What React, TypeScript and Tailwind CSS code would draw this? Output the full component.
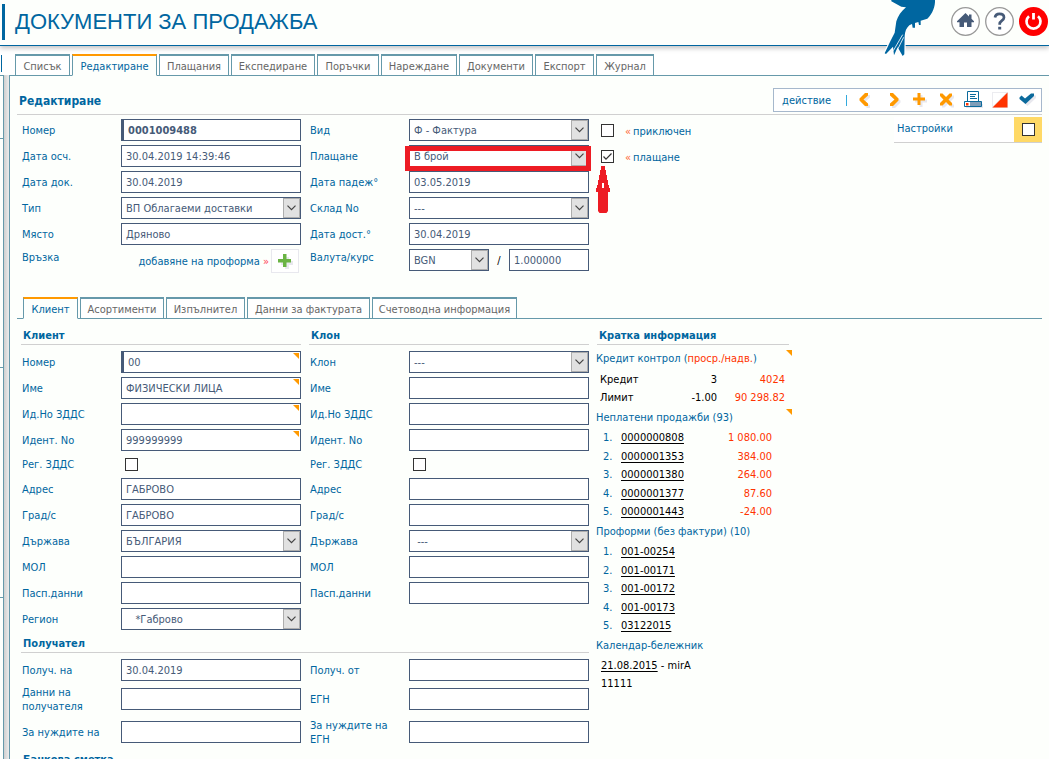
import { ReactNode, useId } from 'react';

const MAIN_TABS = [
  { label: 'Списък', width: 'w-[55px]' },
  { label: 'Редактиране', width: 'w-[85px]', active: true },
  { label: 'Плащания', width: 'w-[70px]' },
  { label: 'Експедиране', width: 'w-[84px]' },
  { label: 'Поръчки', width: 'w-[62px]' },
  { label: 'Нареждане', width: 'w-[76px]' },
  { label: 'Документи', width: 'w-[74px]' },
  { label: 'Експорт', width: 'w-[59px]' },
  { label: 'Журнал', width: 'w-[58px]' },
];

const DETAIL_TABS = [
  { label: 'Клиент', width: 'w-[55px]', active: true },
  { label: 'Асортименти', width: 'w-[84px]' },
  { label: 'Изпълнител', width: 'w-[79px]' },
  { label: 'Данни за фактурата', width: 'w-[123px]' },
  { label: 'Счетоводна информация', width: 'w-[145px]' },
];

const UNPAID = [
  ['0000000808', '1 080.00'],
  ['0000001353', '384.00'],
  ['0000001380', '264.00'],
  ['0000001377', '87.60'],
  ['0000001443', '-24.00'],
];

const PROFORMAS = ['001-00254', '001-00171', '001-00172', '001-00173', '03122015'];

export default function App() {
  return (
    <div className="h-screen overflow-hidden flex flex-col bg-[#fdfffc] text-[#0066a0] text-[11px] leading-[14px] font-['DejaVu_Sans_Condensed','DejaVu_Sans',sans-serif]">
      <Header />
      <div className="flex flex-1 min-h-0">
        <SideStrip />
        <main className="flex-1 min-w-0 flex flex-col">
          <Tabs tabs={MAIN_TABS} className="pt-2 bg-white" />
          <div className="flex-1 border-l border-[#6699aa] px-[7px]">
            <div className="flex items-end justify-between h-[39px] pb-0.5 border-b border-[#d0d0d0]">
              <h2 className="pl-0.5 pb-[3px] text-xs font-bold">Редактиране</h2>
              <Toolbar />
            </div>
            <div className="flex justify-between items-start">
              <DocumentForm />
              <Settings />
            </div>
            <Tabs tabs={DETAIL_TABS} className="mt-[22px]" />
            <div className="flex gap-2 pl-1">
              <div className="shrink-0">
                <div className="flex gap-2">
                  <ClientColumn />
                  <BranchColumn />
                </div>
                <RecipientSection />
                <SectionTitle>Банкова сметка</SectionTitle>
              </div>
              <InfoColumn />
            </div>
          </div>
        </main>
      </div>
    </div>
  );
}

function Header() {
  return (
    <header className="relative z-10 shrink-0 h-[46px] flex items-start justify-between border-b border-[#0066a0] bg-[#fdfffc] shadow-[0_2px_5px_rgba(0,0,0,0.25)]">
      <div className="mt-1 ml-0.5 h-9 border-l-3 border-[#0066a0] pl-[10px] flex items-center">
        <h1 className="text-[22px] leading-9 font-['Liberation_Sans',Arial,sans-serif]">ДОКУМЕНТИ ЗА ПРОДАЖБА</h1>
      </div>
      <div className="flex items-start">
        <Swallow />
        <div className="flex gap-[5px] pt-[7px] pr-px">
          <button aria-label="Начало" className="size-[29px]">
            <svg viewBox="0 0 29 29" className="size-full">
              <circle cx="14.5" cy="14.5" r="13.8" fill="#fff" stroke="#999" strokeWidth="1.3" />
              <path d="M14.5 6 6 14.3v1h2.500V20h4.500v-4.500h3V20h4.500v-4.700H23v-1l-2.500-2.500V7.500h-2.500v1.900z" fill="#465a78" />
            </svg>
          </button>
          <button aria-label="Помощ" className="size-[29px]">
            <svg viewBox="0 0 29 29" className="size-full">
              <circle cx="14.5" cy="14.5" r="13.8" fill="#fff" stroke="#999" strokeWidth="1.3" />
              <path d="M10 10.500C10.300 7.800 12 6.800 14.500 6.800s4.500 1.300 4.500 3.700c0 3-4.300 3.200-4.300 6.300v1" fill="none" stroke="#465a78" strokeWidth="2.700" />
              <path d="M13.200 19.800h3v2.700h-3z" fill="#465a78" />
            </svg>
          </button>
          <button aria-label="Изход" className="size-[29px]">
            <svg viewBox="0 0 29 29" className="size-full">
              <circle cx="14.5" cy="14.5" r="14.500" fill="#f00" />
              <path d="M10 9.200a7 7 0 1 0 9 0" fill="none" stroke="#fff" strokeWidth="2.700" />
              <path d="M13.100 6h2.800v6.500h-2.800z" fill="#fff" />
            </svg>
          </button>
        </div>
      </div>
    </header>
  );
}

function Swallow() {
  const body =
    'M64 0H195C196 18 188 42 172 56L152 62V75H147L145 66 135 69V83H128L126 72 118 76C109 84 105 94 104 108L103 163 98 168 83 142 72 166 69 140 48 162 44 160 61 124 74 98 79 64C84 48 93 34 108 22L94 20 64 4Z';
  return (
    <svg viewBox="42 0 156 174" className="w-[52px] h-[58px] mr-[15px]">
      <path d="M104 100 103 163 98 168 83 142 72 166 69 140 48 162 44 160 61 124 76 94Z" fill="#fff" stroke="#fff" strokeWidth="7" />
      <path d={body} fill="#0066a0" />
      <path d="M98 104 70 152M101 112 84 146" stroke="#fff" strokeWidth="2.500" fill="none" />
    </svg>
  );
}

function SideStrip() {
  return (
    <div className="w-[9px] shrink-0 flex flex-col bg-white">
      <div className="mt-[9px] ml-px w-px h-[17px] bg-[#0066a0]" />
      <div className="mt-[3px] flex-1 flex">
        <div className="w-1 border-t border-r border-[#6699aa] bg-[#fdfffc]">
          <div className="h-[63px] border-b border-[#6699aa]" />
          <div className="h-[229px] border-b border-[#6699aa]" />
          <div className="h-[230px] border-b border-[#6699aa]" />
        </div>
        <div className="w-[5px] bg-linear-to-r from-[#cfcfcf] to-[#ececec]" />
      </div>
    </div>
  );
}

function Tabs({ tabs, className }: { tabs: { label: string; width: string; active?: boolean }[]; className: string }) {
  return (
    <nav className={`flex gap-0.5 pl-1.5 border-b border-[#6699aa] ${className}`}>
      {tabs.map(({ label, width, active }) => (
        <button
          key={label}
          className={`h-[22px] -mb-px border border-t-2 pt-0.5 whitespace-nowrap flex items-center justify-center ${width} ${
            active
              ? 'border-[#6699aa] border-t-[#ff9900] border-b-[#fdfffc] bg-[#fdfffc] text-[#0066a0]'
              : 'border-[#6699aa] bg-white text-[#666]'
          }`}
        >
          {label}
        </button>
      ))}
    </nav>
  );
}

function ToolButton({ label, children }: { label: string; children: ReactNode }) {
  return (
    <button aria-label={label} className="w-[27px] h-[22px] flex items-center justify-center">
      <svg viewBox="0 0 20 20" className="size-5">
        {children}
      </svg>
    </button>
  );
}

// glyph with its pale drop shadow
function Glyph({ d, color }: { d: string; color: string }) {
  return (
    <>
      <path d={d} fill="#e8e8ee" transform="translate(2 2)" />
      <path d={d} fill={color} />
    </>
  );
}

function Toolbar() {
  return (
    <div className="h-6 flex items-center border border-[#a6b8cc] bg-white pr-px">
      <button className="pl-2 pr-[15px] pt-0.5">действие</button>
      <span className="w-px h-[11px] mr-[3px] bg-[#33aadd]" />
      <ToolButton label="Предишен">
        <Glyph color="#ff9900" d="M11 3h3v2.500L9.500 9.500l4.500 4V16h-3L5.500 10.500v-2z" />
      </ToolButton>
      <span className="w-[3px]" />
      <ToolButton label="Следващ">
        <Glyph color="#ff9900" d="M9 3H6v2.500L10.500 9.500 6 13.500V16h3l5.500-5.500v-2z" />
      </ToolButton>
      <div className="-ml-0.5 flex">
        <ToolButton label="Нов">
          <Glyph color="#ff9900" d="M8.500 3h3v4.500H16v3h-4.500V15h-3v-4.500H4v-3h4.500z" />
        </ToolButton>
        <ToolButton label="Изтриване">
          <Glyph color="#ff9900" d="M4 3.500h2.500L10 7l3.500-3.500H16V6l-3.500 3.500L16 13v2.500h-2.500L10 12l-3.500 3.500H4V13l3.500-3.500L4 6z" />
        </ToolButton>
        <ToolButton label="Печат">
          <path d="M3 14h17v4H3z" fill="#e8e8ee" />
          <path d="M4.500 1.500h11v10h-11z" fill="#fff" stroke="#0b6a9c" />
          <path d="M7 4.500h6M7 6.500h5M7 8.500h7" stroke="#0b6a9c" />
          <path d="M1.500 11.500h17v5h-17z" fill="#7f9db8" stroke="#0b6a9c" />
          <path d="M2 12h5v4H2z" fill="#fff" />
          <path d="M3 13h2.500v2.500H3z" fill="#ff3300" />
        </ToolButton>
        <ToolButton label="Цвят">
          <path d="M2 2h16v16H2z" fill="#ececf0" />
          <path d="M3 3h13L3 16z" fill="#fff" />
          <path d="M17.500 2.500V17.500H2.500z" fill="#ff3300" />
        </ToolButton>
        <ToolButton label="Запис">
          <Glyph color="#0b6a9c" d="M2.500 7.500 4.500 5.500 8 8.500 14 3.500h3V6L8.500 14 2.500 9z" />
        </ToolButton>
      </div>
    </div>
  );
}

function Checkbox({ id, checked }: { id?: string; checked?: boolean }) {
  return (
    <span className="relative block size-[13px] shrink-0">
      <input
        id={id}
        type="checkbox"
        defaultChecked={checked}
        className="peer appearance-none block size-[13px] border border-[#333] bg-white"
      />
      <svg viewBox="0 0 13 13" className="absolute inset-0 hidden peer-checked:block pointer-events-none">
        <path d="M2.500 6.500 5 9.200 10.500 3.500" fill="none" stroke="#333" strokeWidth="1.200" />
      </svg>
    </span>
  );
}

function TextInput({
  id,
  value = '',
  required,
  bold,
  corner,
  label,
}: {
  id?: string;
  value?: string;
  required?: boolean;
  bold?: boolean;
  corner?: boolean;
  label?: string;
}) {
  return (
    <span className="relative block w-full">
      <input
        id={id}
        type="text"
        aria-label={label}
        defaultValue={value}
        className={`block w-full h-[22px] border border-[#465a78] bg-white pt-px pl-1 text-[#465a78] outline-none ${
          required ? 'border-l-3' : ''
        } ${bold ? 'font-bold' : ''}`}
      />
      {corner && <Corner className="absolute top-0.5 right-0.5" />}
    </span>
  );
}

function Corner({ className }: { className: string }) {
  return (
    <svg viewBox="0 0 6 6" className={`size-1.5 ${className}`}>
      <path d="M0 0h6v6z" fill="#ff9900" />
    </svg>
  );
}

function Select({ id, value, label, children }: { id?: string; value: string; label?: string; children?: ReactNode }) {
  return (
    <span className="relative block w-full">
      <select
        id={id}
        aria-label={label}
        defaultValue={value}
        className="appearance-none block w-full h-[22px] border border-[#465a78] bg-white pl-1 pr-5 pt-0.5 text-[#465a78] outline-none whitespace-pre"
      >
        <option value={value}>{value}</option>
      </select>
      <span className="absolute top-px right-px w-[17px] h-5 border border-[#adadad] bg-[#e1e1e1] flex items-center justify-center pointer-events-none">
        <svg viewBox="0 0 9 6" className="w-[9px] h-1.5">
          <path d="M.5 .700 4.500 4.700 8.500 .700" fill="none" stroke="#444" strokeWidth="1.200" />
        </svg>
      </span>
      {children}
    </span>
  );
}

function Row({ label, children }: { label: string; children: (id: string) => ReactNode }) {
  const id = useId();
  return (
    <div className="flex h-[26px]">
      <label htmlFor={id} className="w-[99px] shrink-0 pt-[5px]">
        {label}
      </label>
      <div className="w-[180px]">{children(id)}</div>
    </div>
  );
}

function FlagRow({ label, checked }: { label: string; checked?: boolean }) {
  const id = useId();
  return (
    <div className="relative flex h-[26px] pt-[5px] gap-[11px]">
      <Checkbox id={id} checked={checked} />
      <label htmlFor={id} className="whitespace-nowrap pt-px">
        <span className="mr-0.5 text-[#ff6633]">«</span>
        {label}
      </label>
      {checked && (
        <svg viewBox="0 0 14 47" className="absolute -left-[5px] top-[21px] w-3.5 h-[47px]">
          <path
            d="M5 0H9V4H10V9H11V14H12V19H13V22H14V26H12V45L10.500 47H3.500L2 45V26H0V22H1V19H2V14H3V9H4V4H5Z"
            fill="#ed1c24"
          />
          <path d="M6 17h2v5H6z" fill="#fff" />
        </svg>
      )}
    </div>
  );
}

function DocumentForm() {
  return (
    <div className="flex pt-1 pl-[5px]">
      <div className="mr-[9px]">
        <Row label="Номер">{(id) => <TextInput id={id} value="0001009488" required bold />}</Row>
        <Row label="Дата осч.">{(id) => <TextInput id={id} value="30.04.2019 14:39:46" />}</Row>
        <Row label="Дата док.">{(id) => <TextInput id={id} value="30.04.2019" />}</Row>
        <Row label="Тип">{(id) => <Select id={id} value="ВП Облагаеми доставки" />}</Row>
        <Row label="Място">{(id) => <TextInput id={id} value="Дряново" />}</Row>
        <div className="flex h-[26px] justify-between">
          <span className="pt-0.5">Връзка</span>
          <div className="flex mr-0.5">
            <span className="pt-1.5 mr-0.5 whitespace-nowrap">
              добавяне на проформа <span className="text-[#ff4455]">»</span>
            </span>
            <button aria-label="Добавяне на проформа" className="w-7 h-6 border border-[#e8e8ee] bg-white flex items-center justify-center">
              <svg viewBox="0 0 16 16" className="size-4">
                <path d="M7 3h4v4h4v4h-4v4H7v-4H3V7h4z" fill="#e8e8ee" transform="translate(1 1)" />
                <path d="M6 1h3.500v5H14v3.500H9.500V14H6V9.500H1V6h5z" fill="#6ab344" />
              </svg>
            </button>
          </div>
        </div>
      </div>
      <div className="mr-3">
        <Row label="Вид">{(id) => <Select id={id} value="Ф - Фактура" />}</Row>
        <Row label="Плащане">
          {(id) => (
            <Select id={id} value="В брой">
              <span className="absolute -left-1 top-px w-[186px] h-[25px] border-5 border-[#ed1c24] z-10 pointer-events-none" />
            </Select>
          )}
        </Row>
        <Row label="Дата падеж°">{(id) => <TextInput id={id} value="03.05.2019" />}</Row>
        <Row label="Склад No">{(id) => <Select id={id} value="---" />}</Row>
        <Row label="Дата дост.°">{(id) => <TextInput id={id} value="30.04.2019" />}</Row>
        <div className="flex h-[26px]">
          <span className="w-[99px] pt-0.5">Валута/курс</span>
          <div className="w-20">
            <Select label="Валута" value="BGN" />
          </div>
          <span className="w-5 pt-[5px] text-center text-black">/</span>
          <div className="w-20">
            <TextInput label="Курс" value="1.000000" />
          </div>
        </div>
      </div>
      <div>
        <FlagRow label="приключен" />
        <FlagRow label="плащане" checked />
      </div>
    </div>
  );
}

function Settings() {
  return (
    <label className="mt-0.5 w-[148px] h-[26px] flex justify-between border-b border-[#d0d0d0] bg-white">
      <span className="pl-[3px] pt-[5px]">Настройки</span>
      <span className="w-7 bg-[#ffd966] flex items-center justify-center">
        <Checkbox />
      </span>
    </label>
  );
}

function SectionTitle({ children }: { children: ReactNode }) {
  return <h3 className="h-[23px] pt-[7px] pl-0.5 font-bold border-b border-[#d0d0d0]">{children}</h3>;
}

function VatRow() {
  const id = useId();
  return (
    <div className="flex h-[23px]">
      <label htmlFor={id} className="w-[103px] pt-[3px]">
        Рег. ЗДДС
      </label>
      <div className="pt-[3px]">
        <Checkbox id={id} />
      </div>
    </div>
  );
}

function ClientColumn() {
  return (
    <div className="w-[280px] pt-[3px]">
      <SectionTitle>Клиент</SectionTitle>
      <div className="pt-1.5 pl-px">
        <Row label="Номер">{(id) => <TextInput id={id} value="00" required corner />}</Row>
        <Row label="Име">{(id) => <TextInput id={id} value="ФИЗИЧЕСКИ ЛИЦА" corner />}</Row>
        <Row label="Ид.Но ЗДДС">{(id) => <TextInput id={id} corner />}</Row>
        <Row label="Идент. No">{(id) => <TextInput id={id} value="999999999" corner />}</Row>
        <VatRow />
        <Row label="Адрес">{(id) => <TextInput id={id} value="ГАБРОВО" />}</Row>
        <Row label="Град/с">{(id) => <TextInput id={id} value="ГАБРОВО" />}</Row>
        <Row label="Държава">{(id) => <Select id={id} value="БЪЛГАРИЯ" />}</Row>
        <Row label="МОЛ">{(id) => <TextInput id={id} />}</Row>
        <Row label="Пасп.данни">{(id) => <TextInput id={id} />}</Row>
        <Row label="Регион">{(id) => <Select id={id} value={'\u00a0\u00a0\u00a0*Габрово'} />}</Row>
      </div>
    </div>
  );
}

function BranchColumn() {
  return (
    <div className="w-[280px] pt-[3px]">
      <SectionTitle>Клон</SectionTitle>
      <div className="pt-1.5 pl-px">
        <Row label="Клон">{(id) => <Select id={id} value="---" />}</Row>
        <Row label="Име">{(id) => <TextInput id={id} />}</Row>
        <Row label="Ид.Но ЗДДС">{(id) => <TextInput id={id} />}</Row>
        <Row label="Идент. No">{(id) => <TextInput id={id} />}</Row>
        <VatRow />
        <Row label="Адрес">{(id) => <TextInput id={id} />}</Row>
        <Row label="Град/с">{(id) => <TextInput id={id} />}</Row>
        <Row label="Държава">{(id) => <Select id={id} value={'\u00a0---'} />}</Row>
        <Row label="МОЛ">{(id) => <TextInput id={id} />}</Row>
        <Row label="Пасп.данни">{(id) => <TextInput id={id} />}</Row>
      </div>
    </div>
  );
}

function RecipientField({ label, value }: { label: string; value?: string }) {
  const id = useId();
  return (
    <div className="w-[280px] pl-px flex items-center">
      <label htmlFor={id} className="w-[99px] shrink-0 pr-4 pt-0.5">
        {label}
      </label>
      <TextInput id={id} value={value} />
    </div>
  );
}

function RecipientSection() {
  return (
    <section className="-mt-1">
      <SectionTitle>Получател</SectionTitle>
      <div className="pt-1.5 flex gap-2 h-7">
        <RecipientField label="Получ. на" value="30.04.2019" />
        <RecipientField label="Получ. от" />
      </div>
      <div className="mt-1 flex gap-2 h-7">
        <RecipientField label="Данни на получателя" />
        <RecipientField label="ЕГН" />
      </div>
      <div className="mt-[5px] flex gap-2 h-7">
        <RecipientField label="За нуждите на" />
        <RecipientField label="За нуждите на ЕГН" />
      </div>
    </section>
  );
}

function InfoHeading({ corner, children }: { corner?: boolean; children: ReactNode }) {
  return (
    <h4 className="relative h-[18px] my-0.5 pt-0.5 -ml-px whitespace-nowrap">
      {children}
      {corner && <Corner className="absolute top-0 right-0" />}
    </h4>
  );
}

function InfoColumn() {
  return (
    <aside className="w-[195px] pt-[3px]">
      <div className="mr-[3px]">
        <SectionTitle>Кратка информация</SectionTitle>
      </div>
      <div className="pt-[3px]">
        <InfoHeading corner>
          Кредит контрол (<span className="text-[#ff3300]">проср./надв.</span>)
        </InfoHeading>
        <table className="w-[188px] mt-[3px] ml-[3px] text-black">
          <tbody>
            <tr className="h-[18px]">
              <td className="w-[50px]">Кредит</td>
              <td className="w-[67px] text-right">3</td>
              <td className="pr-[3px] text-right text-[#ff3300]">4024</td>
            </tr>
            <tr className="h-[18px]">
              <td>Лимит</td>
              <td className="text-right">-1.00</td>
              <td className="pr-[3px] text-right text-[#ff3300]">90 298.82</td>
            </tr>
          </tbody>
        </table>
        <InfoHeading corner>Неплатени продажби (93)</InfoHeading>
        <ol className="h-[92px] w-[175px] flex flex-col justify-between">
          {UNPAID.map(([no, sum], i) => (
            <li key={no} className="flex h-[18px] items-center">
              <span className="w-6 pl-1.5">{i + 1}.</span>
              <a href="#" className="text-black underline underline-offset-2">{no}</a>
              <span className="ml-auto text-[#ff3300]">{sum}</span>
            </li>
          ))}
        </ol>
        <InfoHeading>Проформи (без фактури) (10)</InfoHeading>
        <ol className="h-[92px] flex flex-col justify-between">
          {PROFORMAS.map((no, i) => (
            <li key={no} className="flex h-[18px] items-center">
              <span className="w-6 pl-1.5">{i + 1}.</span>
              <a href="#" className="text-black underline underline-offset-2">{no}</a>
            </li>
          ))}
        </ol>
        <InfoHeading>Календар-бележник</InfoHeading>
        <div className="pl-1 text-black leading-[18px]">
          <p>
            <a href="#" className="underline underline-offset-2">21.08.2015</a> - mirA
          </p>
          <p>11111</p>
        </div>
      </div>
    </aside>
  );
}
